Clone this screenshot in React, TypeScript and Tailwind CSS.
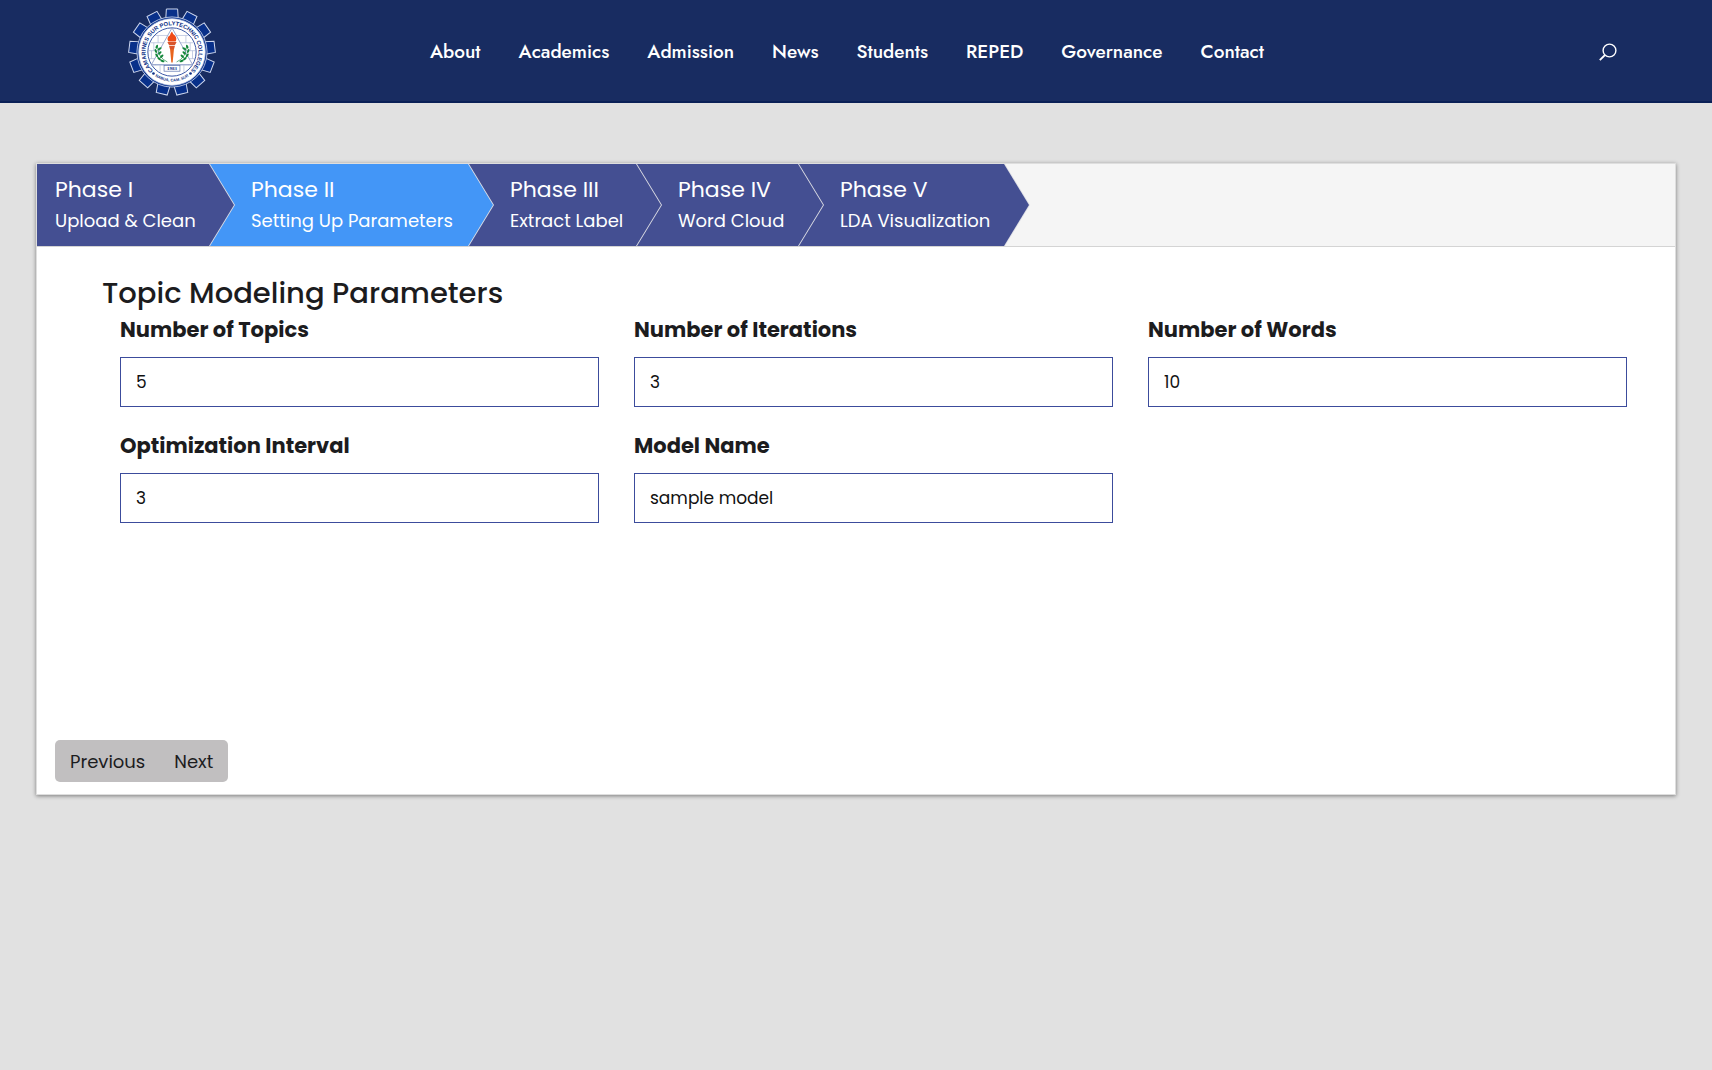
import React from "react";

const NAV = ["About", "Academics", "Admission", "News", "Students", "REPED", "Governance", "Contact"];

const STEPS = [
  { title: "Phase I", text: "Upload & Clean", box: "w-[198px] z-50", pad: "pl-[18px]", active: false },
  { title: "Phase II", text: "Setting Up Parameters", box: "w-[284px] -ml-[25px] z-40", pad: "pl-[41px]", active: true },
  { title: "Phase III", text: "Extract Label", box: "w-[193px] -ml-[25px] z-30", pad: "pl-[41px]", active: false },
  { title: "Phase IV", text: "Word Cloud", box: "w-[187px] -ml-[25px] z-20", pad: "pl-[41px]", active: false },
  { title: "Phase V", text: "LDA Visualization", box: "w-[231px] -ml-[25px] z-10", pad: "pl-[41px]", active: false },
];

const FIELDS = [
  { id: "topics", label: "Number of Topics", value: "5" },
  { id: "iterations", label: "Number of Iterations", value: "3" },
  { id: "words", label: "Number of Words", value: "10" },
  { id: "interval", label: "Optimization Interval", value: "3" },
  { id: "model", label: "Model Name", value: "sample model" },
];

const TEETH = Array.from({ length: 13 }, (_, i) => (i * 360) / 13);

const LEAVES = [
  [-46, -16, 20],
  [-37, -10, 60],
  [-49, -3, -20],
  [-37, 3, 50],
  [-46, 10, -35],
  [-31, 13, 45],
  [-39, 20, -50],
  [-29, 27, -70],
];

function Laurel() {
  return (
    <g fill="#12863a">
      <path d="M-14 30 Q-42 18 -44 -18" fill="none" stroke="#12863a" strokeWidth="2" />
      {LEAVES.map(([x, y, r]) => (
        <ellipse key={`${x} ${y}`} cx={x} cy={y} rx="3.2" ry="6.5" transform={`rotate(${r} ${x} ${y})`} />
      ))}
    </g>
  );
}

function Logo() {
  return (
    <svg viewBox="-133 -133 266 266" className="size-22" role="img" aria-label="Camarines Sur Polytechnic Colleges">
      <defs>
        <path id="ring-top" d="M-50 62 A80 80 0 1 1 50 62" />
        <path id="ring-bottom" d="M-62 64 A89 89 0 0 0 62 64" />
      </defs>
      {TEETH.map((a) => (
        <path key={a} d="M-19 -98 L-17 -130 H17 L19 -98 Z" transform={`rotate(${a})`} fill="#08308a" stroke="#cfd8ee" strokeWidth="3" />
      ))}
      <circle r="106" fill="#08308a" stroke="#cfd8ee" strokeWidth="2.5" />
      <circle r="101" fill="#fff" stroke="#9fb0da" strokeWidth="2" />
      <circle r="73" fill="#fff" stroke="#3a57a4" strokeWidth="3" />
      <path
        d="M-51 -50H51M-66 -28H66M-71 -4H71M-68 20H68M-58 40H58M-42 -50V-28M42 -50V-28M-55 -28V-4M55 -28V-4M-62 -4V20M62 -4V20M-50 20V40M50 20V40M-36 40V60M36 40V60"
        stroke="#aab6d6"
        strokeWidth="2"
        fill="none"
      />
      <path d="M0 -73 L-62 38 H62 Z" fill="#fff" stroke="#8798c6" strokeWidth="2.5" />
      <Laurel />
      <g transform="scale(-1 1)">
        <Laurel />
      </g>
      <path d="M-6 -10 H6 L2 32 H-2 Z" fill="#e8641e" />
      <path d="M-14 -30 H14 L9 -21 H-9 Z M-9 -19 H9 L6 -8 H-6 Z" fill="#d9542a" />
      <path d="M-11 -32 Q-18 -44 -6 -51 Q-5 -57 0 -62 Q2 -54 9 -50 Q16 -41 11 -32 Z" fill="#ee4a16" />
      <rect x="-24" y="41" width="48" height="17" fill="#fff" stroke="#5268a8" strokeWidth="2" />
      <g fill="#0d2f86" fontFamily="Liberation Sans, sans-serif" fontWeight="700">
        <text y="55" textAnchor="middle" fontSize="15" fontFamily="Liberation Serif, serif">1983</text>
        <text fontSize="17.5" textAnchor="middle">
          <textPath href="#ring-top" startOffset="50%">CAMARINES SUR POLYTECHNIC COLLEGES</textPath>
        </text>
        <text fontSize="12" textAnchor="middle">
          <textPath href="#ring-bottom" startOffset="50%">NABUA, CAM. SUR</textPath>
        </text>
        <circle cx="-56" cy="65" r="4" />
        <circle cx="56" cy="65" r="4" />
      </g>
    </svg>
  );
}

export default function App() {
  return (
    <div className="min-h-screen bg-[#e1e1e1] font-['Poppins','Inter',sans-serif] text-[#1c1c1e]">
      <header className="flex h-[103px] items-center border-b-2 border-[#0a2056] bg-[#182c61] pt-[3px] pr-[95px] pl-32 text-white">
        <a href="#" className="block">
          <Logo />
        </a>
        <nav className="ml-[214px] flex gap-[38px] font-['Jost','Inter',sans-serif] text-[19px] font-medium">
          {NAV.map((n) => (
            <a key={n} href="#">{n}</a>
          ))}
        </nav>
        <button type="button" aria-label="Search" className="ml-auto">
          <svg viewBox="0 0 18 18" className="size-[18px]" fill="none" stroke="currentColor" strokeWidth="1.4">
            <circle cx="10.5" cy="7.5" r="6.4" />
            <path d="M6 12 L0.8 17.2" strokeWidth="1.8" />
          </svg>
        </button>
      </header>

      <main className="mx-9 mt-[60px] flex min-h-[632px] flex-col border border-[#dedede] bg-white shadow-[0_1px_4px_rgba(0,0,0,0.45)]">
        <ol className="flex h-[83px] border-b border-[#d4d4d4] bg-[#f5f5f5]">
          {STEPS.map((s) => (
            <li
              key={s.title}
              className={`relative shrink-0 bg-[#dfe0e6] [clip-path:polygon(0_0,calc(100%-25px)_0,100%_50%,calc(100%-25px)_100%,0_100%)] ${s.box}`}
            >
              <button
                type="button"
                aria-current={s.active ? "step" : undefined}
                className={`flex h-full w-[calc(100%-1px)] flex-col justify-center text-left whitespace-nowrap text-white [clip-path:polygon(0_0,calc(100%-25px)_0,100%_50%,calc(100%-25px)_100%,0_100%)] ${s.pad} ${s.active ? "bg-[#4396f7]" : "bg-[#444f92]"}`}
              >
                <span className="text-[22px] leading-8">{s.title}</span>
                <span className="text-[18px] leading-[30px]">{s.text}</span>
              </button>
            </li>
          ))}
        </ol>

        <form className="flex grow flex-col">
          <h1 className="mt-7 pl-[65px] text-[29px] leading-9 font-medium">Topic Modeling Parameters</h1>
          <div className="grid grid-cols-3 gap-x-[35px] gap-y-6 pt-1 pr-12 pl-[83px]">
            {FIELDS.map((f) => (
              <div key={f.id} className="flex flex-col gap-3">
                <label htmlFor={f.id} className="text-[21px] leading-[30px] font-bold">{f.label}</label>
                <input
                  id={f.id}
                  type="text"
                  defaultValue={f.value}
                  className="h-[50px] w-full border border-[#3c4c9c] bg-white px-[15px] text-[17px] text-[#111]"
                />
              </div>
            ))}
          </div>
          <div className="mt-auto mb-3 ml-[18px] flex self-start rounded-[5px] bg-[#c1bfc0] text-[18px]">
            <button type="button" className="h-[42px] pr-[14px] pl-[15px]">Previous</button>
            <button type="button" className="h-[42px] pr-[15px] pl-[15px]">Next</button>
          </div>
        </form>
      </main>
    </div>
  );
}
